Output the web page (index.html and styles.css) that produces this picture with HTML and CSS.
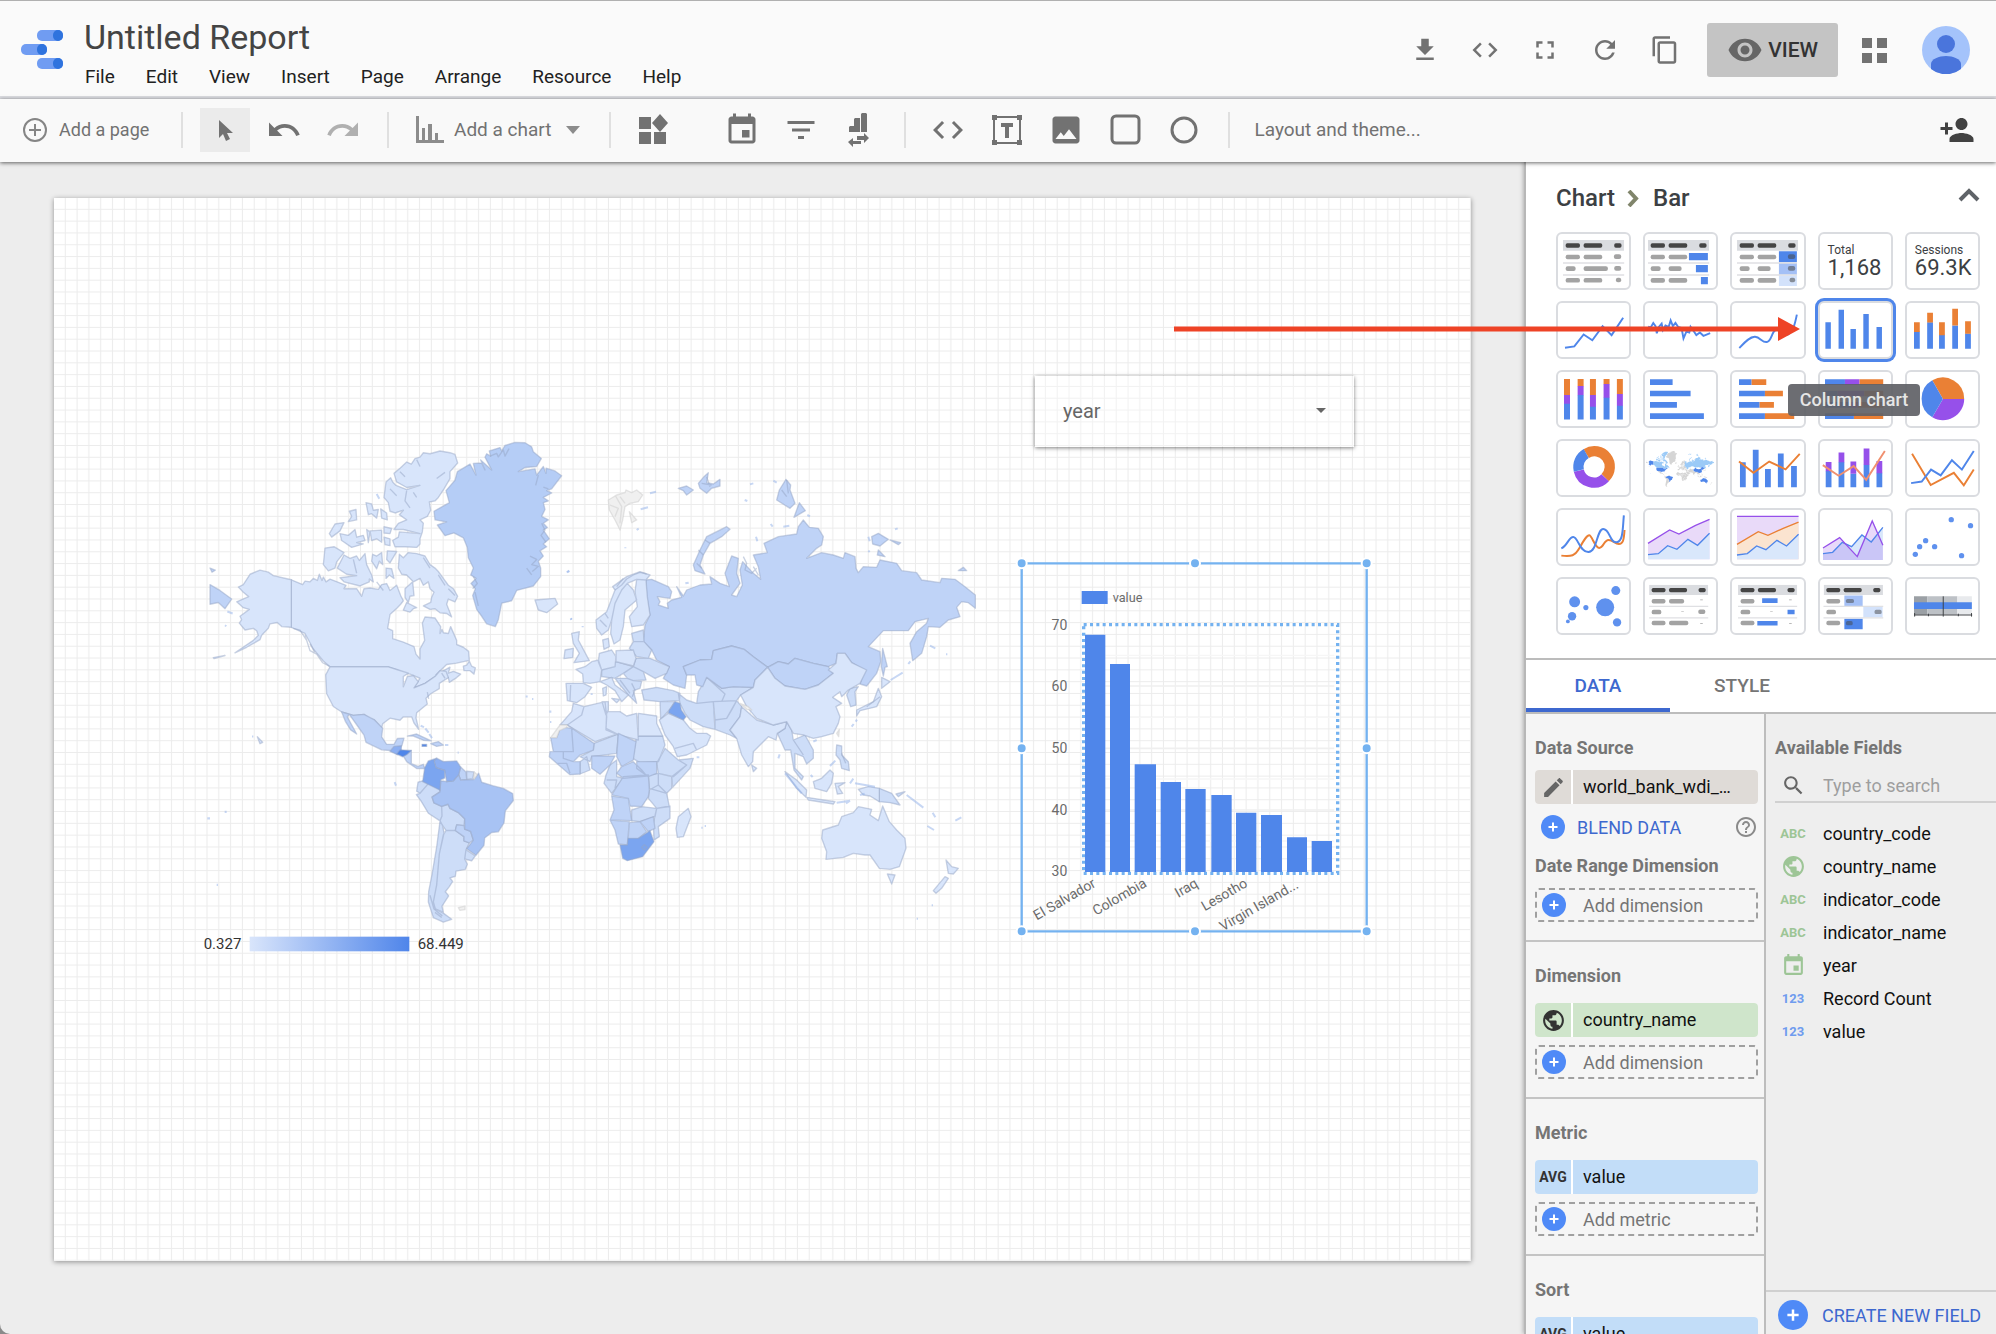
FILE: index.html
```html
<!DOCTYPE html>
<html lang="en">
<head>
    <meta charset="UTF-8">
    <meta name="viewport" content="width=device-width, initial-scale=1.0">
    <title>Untitled Report</title>
    <link rel="stylesheet" href="styles.css">
</head>
<body>
    <!-- Shared icons -->
    <svg class="sprite" aria-hidden="true">
        <symbol id="i-plus" viewBox="0 0 24 24"><circle cx="12" cy="12" r="12" fill="#4f8af7"/><path d="M12 7.5v9M7.5 12h9" stroke="#fff" stroke-width="2"/></symbol>
        <symbol id="i-code" viewBox="0 0 24 24"><path d="M9.4 16.6L4.8 12l4.6-4.6L8 6l-6 6 6 6 1.4-1.4zm5.2 0l4.6-4.6-4.6-4.6L16 6l6 6-6 6-1.4-1.4z"/></symbol>
        <symbol id="i-event" viewBox="0 0 24 24"><path d="M17 12h-5v5h5v-5zM16 1v2H8V1H6v2H5c-1.11 0-1.99.9-1.99 2L3 19c0 1.1.89 2 2 2h14c1.1 0 2-.9 2-2V5c0-1.1-.9-2-2-2h-1V1h-2zm3 18H5V8h14v11z"/></symbol>
        <symbol id="i-globe" viewBox="0 0 24 24"><path d="M12 2C6.48 2 2 6.48 2 12s4.48 10 10 10 10-4.48 10-10S17.52 2 12 2zm-1 17.93c-3.95-.49-7-3.85-7-7.93 0-.62.08-1.21.21-1.79L9 15v1c0 1.1.9 2 2 2v1.93zm6.9-2.54c-.26-.81-1-1.39-1.9-1.39h-1v-3c0-.55-.45-1-1-1H8v-2h2c.55 0 1-.45 1-1V7h2c1.1 0 2-.9 2-2v-.41c2.93 1.19 5 4.06 5 7.41 0 2.08-.8 3.97-2.1 5.39z"/></symbol>
        <!-- table header and rows used by the table thumbnails -->
        <symbol id="t-head" viewBox="0 0 184 34"><path fill="#dadce0" d="M0 0h184v32H0z"/><g fill="#454545"><rect x="8" y="10" width="43" height="13" rx="5"/><rect x="62" y="10" width="56" height="13" rx="5"/><rect x="154" y="10" width="22" height="13" rx="5"/></g></symbol>
    </svg>

    <header class="header">
        <svg class="logo" viewBox="0 0 42 40" aria-hidden="true">
            <rect x="16" y="0" width="26" height="11" rx="5" fill="#709cf2"/><rect x="32" y="0" width="10" height="11" rx="5" fill="#2f73de"/>
            <rect x="0" y="14" width="26" height="11" rx="5" fill="#709cf2"/><rect x="16" y="14" width="10" height="11" rx="5" fill="#2f73de"/>
            <rect x="16" y="28" width="26" height="11" rx="5" fill="#709cf2"/><rect x="32" y="28" width="10" height="11" rx="5" fill="#2f73de"/>
        </svg>
        <div class="title-block">
            <h1 class="report-title">Untitled Report</h1>
            <nav class="menu">
                <button>File</button>
                <button>Edit</button>
                <button>View</button>
                <button>Insert</button>
                <button>Page</button>
                <button>Arrange</button>
                <button>Resource</button>
                <button>Help</button>
            </nav>
        </div>
        <div class="header-actions">
            <button class="icon-btn" aria-label="Download"><svg viewBox="0 0 24 24"><path d="M19 9h-4V3H9v6H5l7 7 7-7zM5 18v2h14v-2H5z"/></svg></button>
            <button class="icon-btn" aria-label="Embed"><svg><use href="#i-code"/></svg></button>
            <button class="icon-btn" aria-label="Full screen"><svg viewBox="0 0 24 24"><path d="M7 14H5v5h5v-2H7v-3zm-2-4h2V7h3V5H5v5zm12 7h-3v2h5v-5h-2v3zM14 5v2h3v3h2V5h-5z"/></svg></button>
            <button class="icon-btn" aria-label="Refresh"><svg viewBox="0 0 24 24"><path d="M17.65 6.35C16.2 4.9 14.21 4 12 4c-4.42 0-7.99 3.58-7.99 8s3.57 8 7.99 8c3.73 0 6.84-2.55 7.73-6h-2.08c-.82 2.33-3.04 4-5.65 4-3.31 0-6-2.69-6-6s2.69-6 6-6c1.66 0 3.14.69 4.22 1.78L13 11h7V4l-2.35 2.35z"/></svg></button>
            <button class="icon-btn" aria-label="Copy"><svg viewBox="0 0 24 24"><path d="M16 1H4c-1.1 0-2 .9-2 2v14h2V3h12V1zm3 4H8c-1.1 0-2 .9-2 2v14c0 1.1.9 2 2 2h11c1.1 0 2-.9 2-2V7c0-1.1-.9-2-2-2zm0 16H8V7h11v14z"/></svg></button>
        </div>
        <button class="view-btn">
            <svg viewBox="0 0 24 24"><path d="M12 4.5C7 4.5 2.73 7.61 1 12c1.73 4.39 6 7.5 11 7.5s9.27-3.11 11-7.5c-1.73-4.39-6-7.5-11-7.5zM12 17c-2.76 0-5-2.24-5-5s2.24-5 5-5 5 2.24 5 5-2.24 5-5 5zm0-8c-1.66 0-3 1.34-3 3s1.34 3 3 3 3-1.34 3-3-1.34-3-3-3z"/></svg>
            VIEW
        </button>
        <button class="apps" aria-label="Apps"><svg viewBox="0 0 25 25"><path d="M0 0h10v10H0zM15 0h10v10H15zM0 15h10v10H0zM15 15h10v10H15z"/></svg></button>
        <button class="avatar" aria-label="Account"><svg viewBox="0 0 48 48"><circle cx="24" cy="24" r="24" fill="#a4c3fb"/><circle cx="24" cy="18" r="9" fill="#4a75dc"/><path d="M9 43V38c0-5 8-8 15-8s15 3 15 8v5a24 24 0 0 1-30 0z" fill="#4a75dc"/></svg></button>
    </header>

    <div class="toolbar">
        <button class="add-page">
            <svg viewBox="0 0 28 28"><circle cx="14" cy="14" r="11" fill="none" stroke="#858585" stroke-width="2"/><path d="M14 8v12M8 14h12" stroke="#858585" stroke-width="2"/></svg>
            Add a page
        </button>
        <span class="sep"></span>
        <div class="tools">
            <button class="tool active" aria-label="Select"><svg viewBox="0 0 36 36"><path d="M12 8v18l4-4 3 7 4-2-3-6h6z"/></svg></button>
            <button class="tool" aria-label="Undo"><svg viewBox="0 0 24 24"><path d="M12.5 8c-2.65 0-5.05.99-6.9 2.6L2 7v9h9l-3.62-3.62c1.39-1.16 3.16-1.88 5.12-1.88 3.54 0 6.55 2.31 7.6 5.5l2.37-.78C21.08 11.03 17.15 8 12.5 8z"/></svg></button>
            <button class="tool faded" aria-label="Redo"><svg viewBox="0 0 24 24"><path d="M18.4 10.6C16.55 8.99 14.15 8 11.5 8c-4.65 0-8.58 3.03-9.96 7.22L3.9 16c1.05-3.19 4.05-5.5 7.6-5.5 1.95 0 3.73.72 5.12 1.88L13 16h9V7l-3.6 3.6z"/></svg></button>
        </div>
        <span class="sep"></span>
        <button class="add-chart">
            <svg viewBox="0 0 28 28"><path d="M0 0h3v24h25v3H0zM6 12h3v12H6zM12 8h4v16h-4zM19 17h3v7h-3z"/></svg>
            Add a chart
            <svg class="caret" viewBox="0 0 14 8"><path d="M0 0h14L7 8z"/></svg>
        </button>
        <span class="sep"></span>
        <div class="tools">
            <button class="tool" aria-label="Community visualizations"><svg viewBox="0 0 36 36"><path d="M4 5h12v12H4zM4 20h12v12H4zM19 20h12v12H19zM25 2l8 9-8 9-8-9z"/></svg></button>
            <button class="tool apart" aria-label="Date range"><svg><use href="#i-event"/></svg></button>
            <button class="tool" aria-label="Filter control"><svg viewBox="0 0 24 24"><path d="M10 18h4v-2h-4v2zM3 6v2h18V6H3zm3 7h12v-2H6v2z"/></svg></button>
            <button class="tool" aria-label="Data control"><svg viewBox="0 0 36 36"><path d="M7 20v-5l1-1h4V7l1-1h5v14zM19 20V2l1-1h4l1 1v18zM15 24h7v-3l5 5-5 5v-3h-7zM19 32h-8v3l-5-5 5-4v3h8z"/></svg></button>
        </div>
        <span class="sep"></span>
        <div class="tools">
            <button class="tool" aria-label="URL embed"><svg><use href="#i-code"/></svg></button>
            <button class="tool" aria-label="Text"><svg viewBox="0 0 36 36"><path d="M5 5h26v26H5z" fill="none" stroke="#727272" stroke-width="2"/><path d="M3 3h5v5H3zM28 3h5v5h-5zM3 28h5v5H3zM28 28h5v5h-5zM12 11h12v4h-4v11h-4V15h-4z"/></svg></button>
            <button class="tool" aria-label="Image"><svg viewBox="0 0 24 24"><path d="M21 19V5c0-1.100-.9-2-2-2H5c-1.100 0-2 .9-2 2v14c0 1.100.9 2 2 2h14c1.100 0 2-.9 2-2zM5 18l3.500-4.500 2 2.500L14 11.500 19 18z"/></svg></button>
            <button class="tool" aria-label="Rectangle"><svg viewBox="0 0 36 36"><rect x="5" y="4" width="27" height="27" rx="4" fill="none" stroke="#727272" stroke-width="3"/></svg></button>
            <button class="tool" aria-label="Circle"><svg viewBox="0 0 36 36"><circle cx="18" cy="18" r="12" fill="none" stroke="#727272" stroke-width="3"/></svg></button>
        </div>
        <span class="sep"></span>
        <button class="layout-btn">Layout and theme...</button>
        <button class="share" aria-label="Share"><svg viewBox="0 0 24 24"><path d="M15 12c2.210 0 4-1.790 4-4s-1.790-4-4-4-4 1.790-4 4 1.790 4 4 4zm-9-2V7H4v3H1v2h3v3h2v-3h3v-2H6zm9 4c-2.670 0-8 1.340-8 4v2h16v-2c0-2.660-5.330-4-8-4z"/></svg></button>
    </div>

    <div class="workspace">
        <main class="canvas">
            <div class="page">
                <svg class="grid" viewBox="0 0 120 90" preserveAspectRatio="none" aria-hidden="true">
                    <pattern id="cell" width="1" height="1" patternUnits="userSpaceOnUse"><path d="M.91 0H1V1H0V.91H.91z" fill="#ececec"/></pattern>
                    <rect width="120" height="90" fill="url(#cell)"/>
                </svg>

                <svg class="map" viewBox="0 0 2400 1620" role="img" aria-label="Average value by country">
                    <!-- Americas -->
                    <g transform="scale(1 1.033)">
                        <g class="t0"><path id="canada" d="M304 464L338 478 345 468 360 470 370 460 382 466 388 448 396 466 400 456 408 470 420 462 468 480 462 490 500 490 515 512 522 490 540 488 565 492 575 478 590 475 600 495 620 480 632 510 640 525 632 535 622 545 600 565 593 605 608 612 608 635 640 645 672 658 678 680 690 694 690 665 704 640 697 590 705 572 735 575 752 600 750 620 756 608 760 618 775 620 782 600 800 640 800 652 820 660 836 672 838 698 800 706 770 710 738 740 780 718 775 735 790 730 812 738 800 748 778 762 775 748 735 745 705 765 672 778 680 765 690 750 660 738 640 735 620 725 595 717 420 717 400 700 370 665 345 620 304 602zM612 155L630 140 650 122 664 128 675 112 690 108 700 95 720 98 750 90 780 95 795 100 803 125 780 150 780 170 762 200 745 225 735 235 718 238 722 262 712 280 690 290 700 300 697 325 690 345 690 360 680 370 645 368 615 368 608 350 625 340 628 325 690 330 640 318 612 318 625 300 650 290 628 275 640 262 615 270 600 265 595 240 582 225 588 180 602 168 608 180 618 190 650 202 690 190 650 196 620 180zM405 372L432 368 462 385 440 412 435 430 415 438 400 420zM462 392L480 402 500 395 508 408 525 388 530 420 545 450 550 470 538 462 538 470 510 482 462 470 450 458 500 452 470 448 442 430zM450 330L475 335 495 318 500 340 520 335 525 350 500 356 520 360 485 370 455 350zM418 330L435 302 462 298 450 322 425 340zM478 265L498 260 500 290 475 295 485 280zM528 240L545 244 550 262 565 260 560 285 545 272 535 275zM540 322L575 320 575 355 560 345 545 350zM530 318L540 325 535 356zM572 258L590 270 592 290 575 285zM582 310L605 315 600 330 582 328zM582 340L600 345 600 365 585 362zM548 390L560 395 575 385 578 420 568 410 560 432 545 410zM592 380L620 382 600 415 590 405zM588 430L605 432 612 460 598 450 588 460zM628 390L640 400 655 385 680 388 705 395 720 420 735 430 745 440 760 460 775 480 790 490 803 512 795 528 775 520 770 535 785 572 770 562 750 560 735 548 720 550 700 540 722 530 725 515 732 500 720 490 715 470 700 480 690 460 670 470 650 450 635 448 625 430zM645 490L668 470 672 510 660 512 655 530 645 515zM650 530L680 545 670 548 660 558 640 552zM820 715L830 712 838 700 845 715 856 720 852 738 840 728 822 728z"/></g>
                        <g class="t0"><path id="usa" d="M304 464L250 452 235 442 210 436 180 448 160 478 145 485 160 500 176 513 140 528 160 545 178 550 150 570 155 580 148 590 165 610 190 605 200 612 205 625 190 640 135 676 170 660 210 638 215 625 235 605 240 592 262 588 275 600 304 602zM420 717L595 717 625 726 655 735 640 745 640 775 652 745 670 742 685 760 672 778 705 765 735 745 750 728 768 730 775 748 748 765 748 780 722 795 708 808 712 825 680 850 678 865 686 898 672 880 665 862 640 862 630 872 600 866 578 882 575 895 552 870 540 868 522 855 490 858 455 848 430 832 410 795 407 740zM70 690L105 684 72 693zM202 920L218 936 210 940z"/></g>
                        <g class="t1"><path id="west-rest" d="M698 1048L715 1056 690 1084 680 1078 684 1052zM715 1056L748 1070 750 1080 726 1095 732 1112 755 1122 756 1150 750 1164 715 1142 692 1105 679 1088 690 1084zM755 1122L774 1116 780 1128 805 1140 824 1158 822 1178 800 1176 796 1192 768 1192 758 1178 750 1164 756 1150zM828 1248L856 1266 845 1280 824 1275zM768 1192L796 1192 822 1210 822 1222 838 1228 828 1248 824 1275 832 1290 826 1305 798 1310 796 1325 780 1330 788 1340 778 1355 766 1370 776 1382 756 1412 760 1430 736 1420 730 1400 740 1350 748 1260 760 1205zM750 1164L758 1178 762 1200 748 1260 740 1350 730 1400 736 1420 760 1432 785 1450 760 1458 730 1445 715 1400 716 1370 726 1320 740 1240 748 1180zM830 1020L852 1022 848 1042 830 1044z"/></g>
                        <g class="t2"><path id="mexico" d="M455 848L490 858 522 855 552 870 578 895 575 920 590 942 612 942 622 925 642 924 636 945 620 968 600 960 575 958 528 936 522 915 500 885 478 855 472 862 500 912 482 900 466 875zM664 960L664 998 684 1006 700 1000 704 1012 680 1012 650 992 640 976zM652 918L680 912 724 932 700 930 670 918zM722 940L745 934 760 944 740 948zM796 1192L800 1176 822 1178 824 1188 842 1195 850 1220 838 1228 822 1222 822 1210zM812 1008L828 1022 830 1044 812 1046 806 1030zM60 478L90 495 125 520 105 548 85 530 60 535zM60 430L76 436 66 442z"/></g>
                        <g class="t3"><path id="greenland" d="M802 150L840 128 858 160 850 126 875 125 885 145 872 116 905 145 885 108 890 98 902 105 898 90 930 80 935 90 945 74 975 65 1005 66 1025 78 1030 92 1054 112 1040 135 1005 138 985 150 1035 142 1040 160 1060 135 1068 155 1068 140 1095 148 1115 162 1085 200 1070 205 1085 212 1060 225 1075 235 1060 240 1065 260 1055 280 1075 290 1060 300 1072 312 1060 320 1078 345 1060 360 1070 368 1050 380 1060 395 1045 410 1052 430 1052 455 1030 482 980 495 965 525 935 532 925 580 916 600 890 592 875 570 860 550 848 510 856 490 843 475 858 460 842 450 850 430 835 400 832 370 820 342 792 328 765 336 742 305 770 296 735 290 732 265 778 240 768 205 795 175z"/></g>
                        <g class="t4"><path id="brazil" d="M806 1030L812 1046 850 1044 866 1026 875 1052 908 1062 940 1070 968 1085 970 1105 946 1135 942 1170 925 1196 905 1198 884 1214 882 1235 858 1264 830 1245 850 1220 842 1195 824 1188 824 1158 805 1140 780 1128 774 1116 755 1122 732 1112 726 1095 750 1080 752 1048 770 1050 790 1048z"/></g>
                        <path class="t5" d="M612 948L634 946 634 970 622 972 600 962zM740 982L760 992 800 990 812 1008 806 1030 790 1048 770 1050 764 1018 738 1010 732 990z"/>
                        <path class="t6" d="M740 982L715 990 704 1010 698 1050 735 1068 750 1075 752 1045 764 1040 764 1018 738 1010 732 990z"/>
                        <path class="t7" d="M630 958L664 960 650 972 638 978 620 970zM696 942h14v6h-14z"/>
                        <path class="tn" d="M852 1022L862 1030 852 1044zM805 1416L825 1412 825 1422 810 1424z"/>
                        <!-- fjords and island channels -->
                        <path class="coast" d="M900 105l20-8 5 10 15-20 5 18 12-22M1045 160l-8 30M1060 195l15 5M1055 300l10 20-12 15 15 20M1020 395l20 10-15 15 20 5-18 15M1010 430l15 20M850 455l12 20-14 15M855 500l10 40M630 150l15 15M680 115l10 20M740 170l25-18M600 200l20 20M650 205l-5 30 15 20M670 210l10 15M310 605l20 5 20 30 10 30 20 10 18 25 20 10M345 625l10 30M360 650l15 25M720 1380l12 40 25 20M735 1430l20 15M700 400l20 30M745 450l20 30M775 490l20 20M560 470l20 25M490 405l10 40M712 790l4 20M755 735l10 15"/>
                        <path class="specks" d="M692 888l10 4M706 896l10 12M718 912l8 12M765 944h10M186 919h4M104 1138h6M52 1157h8M614 1052l4 10M80 1350h4M1007 803h6M1026 810h4M1078 847h6M1142 576l3 4M1132 442l6-3M105 596l4 3M112 556l16 6M560 215l8 14M803 966h3M1080 877h4"/>
                    </g>

                    <!-- Europe, Africa, Asia, Oceania -->
                    <g transform="translate(1050 60)">
                        <g class="t2"><path id="russia" d="M318 420L335 418 385 440 395 455 390 475 352 470 360 485 355 495 385 505 382 490 395 480 425 472 410 440 430 468 440 450 480 435 515 432 510 410 540 430 568 440 555 400 575 348 595 355 590 400 600 430 575 465 590 470 607 435 600 390 608 365 640 400 662 418 655 380 640 345 682 338 672 310 715 290 770 282 775 260 790 240 808 262 835 265 850 290 845 315 830 325 800 355 845 338 880 345 910 355 915 338 945 350 948 385 955 398 970 380 1010 382 1020 360 1070 370 1085 392 1130 398 1145 420 1200 428 1205 415 1245 418 1275 440 1306 465 1306 505 1285 488 1265 485 1250 502 1260 530 1225 540 1200 562 1165 560 1160 590 1145 640 1118 662 1110 610 1130 575 1160 550 1165 535 1125 545 1105 572 1030 572 985 620 1020 635 1022 665 1010 700 980 738 960 732 972 690 935 668 915 640 892 640 888 670 865 680 820 670 765 655 745 672 715 665 683 682 640 650 612 628 575 618 520 632 515 658 480 660 430 680 440 705 435 745 400 735 370 715 388 680 350 660 335 630 310 605 315 555 330 525 320 470zM1028 625L1042 680 1035 682 1030 708 1024 680zM560 260L570 268 545 290 510 310 490 345 480 375 495 402 465 392 460 375 480 330 500 290 530 275zM738 118L752 135 750 150 765 190 750 205 710 180 718 150zM778 188L796 212 762 232zM995 290L1015 280 1045 298 1020 318 998 312zM1050 300L1082 308 1075 314zM1015 330L1035 350 1012 345zM415 145L440 138 460 150 440 165 430 152zM475 130L492 110 505 98 500 128 520 132 540 118 540 138 515 145 500 160 480 145zM1255 392L1270 382 1280 392z"/></g>
                        <g class="t1"><path id="eurasia" d="M275 580L310 570 312 605 280 605zM268 625L280 605 312 605 335 630 325 655 290 650zM288 655L330 655 388 680 380 700 345 715 310 695 280 680zM185 690L228 665 280 680 250 700 225 715 185 710zM250 700L280 680 310 695 318 720 280 722 262 715zM262 715L280 722 305 724 300 745 280 752 290 790 265 765 240 735 225 715zM305 750L350 742 400 752 420 760 418 782 360 785 312 780zM470 790L475 755 500 712 545 745 580 740 640 742 602 765 590 782 520 785zM500 712L555 762 545 785M415 760L440 780 470 790 520 785 525 868 490 860 450 840 435 820 420 790zM520 785L590 782 575 810 560 835 525 840zM590 782L605 800 600 830 570 870 590 895 570 885 525 868 525 840 560 835zM360 785L405 785 388 810 362 838zM740 845L755 870 760 900 795 885 820 930 820 955 800 972 790 950 765 940 765 985 790 1010 785 1020 762 990 752 930 735 930 712 880 735 865zM760 900L790 945M605 945M930 745L955 740 945 755 948 795 932 800 920 765zM890 915L905 918 905 945 925 965 928 992 905 985 900 960 888 945zM1018 1045L1055 1060 1080 1095 1050 1088 1018 1085zM1068 1062L1095 1055 1075 1070z"/></g>
                        <g class="t0"><path id="eurasia-light" d="M168 540L200 515 225 450 218 440 260 410 300 395 330 405 318 420 290 418 262 430 245 450 225 490 215 540 205 570 185 585 170 565zM262 430L280 450 290 480 255 510 250 560 240 600 222 612 212 580 215 540 225 490 245 450zM290 418L318 420 322 470 330 525 310 555 275 560 268 530 292 500 285 455zM188 600L205 595 208 620 192 628zM178 640L215 630 228 650 225 680 185 690 175 665zM228 632L280 630 288 655 280 678 228 665zM108 688L135 680 155 665 175 660 185 690 180 725 150 730 130 728 128 702zM78 730L130 730 155 742 135 770 110 788 82 782zM92 735L90 782M95 580L118 575 115 600 148 662 102 668 118 640 100 610zM75 630L100 625 98 652 72 656zM180 725L215 712 225 735 265 765 245 785 225 752 200 735zM215 775L240 778 230 788zM188 745L200 740 198 765 190 768zM605 800L650 840 700 855 740 845 735 865 712 880 708 900 685 890 640 935 638 965 625 980 605 945 590 895 570 870 600 830zM635 975L650 985 640 995zM358 840L385 820 430 840 450 865 470 880 500 880 512 888 500 915 440 945 412 950 400 920 375 885zM405 925L460 910 470 930M1025 712L1050 725 1025 745zM1015 745L1025 770 1010 800 960 812 950 828 950 810 1000 785zM735 995L770 1020 800 1050 798 1072 770 1045zM800 1072L850 1080 885 1085 880 1092 805 1080zM820 1025L845 1015 870 990 880 1000 875 1030 860 1055 825 1045zM885 1030L915 1028 895 1040 908 1060 892 1062zM955 1048L985 1040 1018 1045 1018 1085 990 1068 970 1065zM1218 1260L1235 1280 1255 1285 1240 1302 1225 1300zM1180 1352L1215 1310 1225 1315 1205 1345 1188 1360zM-15 480L45 475 53 492 20 518-5 510z"/></g>
                        <path class="t2" d="M430 680L480 660 515 658 520 632 575 618 612 628 640 650 683 682 645 720 640 742 580 740 545 745 500 712 488 740 470 735 465 705 440 705zM683 682L715 665 745 672 765 655 820 670 865 680 880 700 835 735 795 748 735 738 705 715z"/>
                        <g class="t0"><path id="china" d="M683 682L705 715 735 738 795 748 835 735 880 700 865 690 888 670 892 640 915 640 935 668 980 690 960 730 925 750 905 770 900 755 878 772 905 790 888 800 900 830 895 850 880 880 845 890 820 895 790 885 760 880 740 845 700 855 650 835 620 800 602 765 640 742 645 720z"/></g>
                        <g class="t0"><path id="australia" d="M848 1170L895 1155 905 1130 940 1118 955 1100 995 1108 990 1125 1015 1142 1028 1098 1048 1145 1070 1170 1095 1195 1098 1225 1078 1280 1050 1288 1018 1285 990 1245 975 1245 940 1240 910 1252 858 1258 860 1235 845 1195zM1042 1302L1065 1305 1055 1332z"/></g>
                        <g class="t1"><path id="africa" d="M290 888L368 888 375 915 355 965 300 968 278 955zM375 925L415 960 440 975 400 1010 355 1000 350 970zM415 960L460 955 450 985 398 1042 395 1010 440 975zM120 965L140 950 150 990 120 1002zM162 910L235 882 230 940 155 950 150 965 120 950 160 930zM325 1005L355 1000 395 1010 395 1045 380 1060 328 1045zM355 1000L355 1035M328 1050L355 1035 380 1060 388 1100 350 1105 325 1075zM275 1110L305 1100 350 1105 345 1130 300 1145 275 1142zM350 1105L390 1098 390 1135 355 1160 358 1190 342 1200 340 1150zM210 975L230 960 230 1010 250 1015 215 1060 192 1030 198 1005zM200 1020L230 1020 225 1045"/></g>
                        <path class="t0" d="M100 790L132 800 125 825 82 855 60 855 95 815zM132 800L195 785 200 830 198 865 232 882 165 905 82 855 125 825zM186 785L205 785 205 810 198 825zM200 815L240 815 260 828 290 820 295 900 235 885 198 870zM295 820L350 828 350 850 368 888 295 888zM445 1105L453 1130 430 1190 412 1192 408 1165 415 1130z"/>
                        <g class="t2"><path id="africa-mid" d="M32 893L50 893 58 872 60 860 95 865 100 935 40 935zM82 855L162 910 160 930 120 945 100 965 70 955 70 935 100 935 95 865zM235 880L288 905 280 960 245 980 230 950zM290 965L350 965 350 1000 325 1010 290 985zM30 935L70 935 70 955 100 965 120 965 120 1002 90 1004 50 970 28 950zM155 948L225 948 210 975 180 1003 155 985zM230 1000L245 980 280 965 305 990 320 1008 250 1015zM250 1010L325 1005 328 1050 325 1070 305 1100 270 1098 265 1075 215 1065zM215 1068L265 1075 275 1142 210 1140 222 1110zM300 1145L340 1130 345 1165 325 1175zM210 1140L268 1145 262 1215 235 1212 225 1170zM268 1148L300 1145 320 1175 290 1200 264 1200zM50 970L80 970 90 1000"/></g>
                        <path class="t6" d="M388 810L405 785 420 790 424 810 438 830 430 840 385 818zM240 1215L262 1215 264 1195 295 1195 330 1172 342 1205 308 1250 262 1262 248 1255zM305 1222l8-8 8 8-8 8z"/>
                        <path class="tn" d="M205 180L230 165 255 158 258 150 275 158 290 150 308 165 295 185 270 190 255 200 248 240 240 270 225 240 208 210zM225 165L245 200 240 250M210 195L235 205 225 230M240 170L255 190M268 215L290 240 275 248zM60 855L82 855 80 862 58 872 50 893 32 893zM890 880L898 868 896 890zM600 790L625 800 635 810 620 808z"/>
                        <path class="coast" d="M225 450l20-15 15-18 20-12 20-8 20 5M230 440l20-25M475 330l15 15M470 370l15 15M495 300l15 10M725 150l15 20M740 120l5 40M610 350l10 20-5 20 20 10 15-15M640 380l15 25M500 110l10 30M485 130l30 5M180 540l20 20M195 520l10 15M275 730l10 20-8 20M240 720l30 40M905 940l12 30M1020 770l-40 30M955 430l0 0"/>
                        <path class="specks" d="M630 133l10-3M614 180l8 3M700 122l10 6M692 252l6 8M730 260l18-3M648 290l4 14M802 225l8 4M1065 268l8-3M985 290l4 14M985 332l4 4M436 430l10-2M1052 720l36-22M1105 672l6-8M1170 617l16 8M1218 643h4M935 860l6-8M947 845l4-6M715 955l4-12M820 905l10-5M812 1005l6 6M870 978l16-16M735 1000l50 60M890 1088l40-6M930 1030l10-14M945 1030l60 10M1100 1065l50 38M1178 1118l8 14M1162 1158l20 12M1246 1142l18-10M484 1163h4M494 1158h4M470 952h8M1175 1396h4M290 270l6-4M256 322v3M302 208l22-6M330 160l18-5M80 397l8-5M128 558v4M92 535l3 4M155 760v5M918 1090l12-8M960 1065l14-4M1130 1436h4"/>
                    </g>

                    <linearGradient id="scale"><stop offset="0" stop-color="#d9e5fb"/><stop offset="1" stop-color="#4f85ea"/></linearGradient>
                    <text class="map-label" x="41" y="1586">0.327</text>
                    <rect x="179" y="1550" width="479" height="44" fill="url(#scale)"/>
                    <text class="map-label" x="683" y="1586">68.449</text>
                </svg>

                <label class="year-filter">
                    <select aria-label="year"><option>year</option></select>
                    <svg viewBox="0 0 10 5"><path d="M0 0h10L5 5z"/></svg>
                </label>

                <svg class="bar-chart" viewBox="0 0 1200 1230" role="img" aria-label="value by country">
                    <path d="M316 438H1003M316 625H1003M316 810H1003" stroke="#efefef" stroke-width="5"/>
                    <path d="M316 346H1003M316 532H1003M316 717H1003M316 903H1003" stroke="#f6f6f6" stroke-width="4"/>
                    <rect x="245" y="153" width="78" height="39" fill="#4f86ea"/>
                    <text class="legend-text" x="338" y="186">value</text>
                    <g class="axis" text-anchor="end">
                        <text x="202" y="270">70</text>
                        <text x="202" y="453">60</text>
                        <text x="202" y="639">50</text>
                        <text x="202" y="825">40</text>
                        <text x="202" y="1008">30</text>
                        <text transform="translate(290 1038) rotate(-30)">El Salvador</text>
                        <text transform="translate(443 1038) rotate(-30)">Colombia</text>
                        <text transform="translate(597 1038) rotate(-30)">Iraq</text>
                        <text transform="translate(745 1038) rotate(-30)">Lesotho</text>
                        <text transform="translate(898 1042) rotate(-30)">Virgin Island...</text>
                    </g>
                    <path d="M251 254H1013V1000H251z" fill="none" stroke="#74b2f0" stroke-width="10" stroke-dasharray="9 10"/>
                    <path fill="#4f86ea" d="M255 284h61v712h-61zM330 372h60v624h-60zM404 673h64v323h-64zM482 726h61v270h-61zM556 747h61v249h-61zM634 765h61v231h-61zM708 818h61v178h-61zM783 825h63v171h-63zM861 892h60v104h-60zM935 903h61v93h-61z"/>
                    <path d="M65 70H1100V1174H65z" fill="none" stroke="#74b2f0" stroke-width="7"/>
                    <g fill="#74b2f0" stroke="#fff" stroke-width="6">
                        <circle cx="65" cy="70" r="15"/><circle cx="585" cy="70" r="15"/><circle cx="1100" cy="70" r="15"/>
                        <circle cx="65" cy="625" r="15"/><circle cx="1100" cy="625" r="15"/>
                        <circle cx="65" cy="1174" r="15"/><circle cx="585" cy="1174" r="15"/><circle cx="1100" cy="1174" r="15"/>
                    </g>
                </svg>
            </div>
        </main>

        <aside class="panel">
            <section class="picker">
                <div class="picker-head">
                    <h2>Chart</h2>
                    <svg class="crumb" viewBox="0 0 12 17"><path d="M2 1l7 7.500-7 7.500" fill="none" stroke="#80856b" stroke-width="4"/></svg>
                    <h2>Bar</h2>
                    <button class="collapse" aria-label="Collapse"><svg viewBox="0 0 22 15"><path d="M2 13l9-9 9 9" fill="none" stroke="#5f6368" stroke-width="4"/></svg></button>
                </div>
                <div class="charts">
                    <button class="thumb" aria-label="Table"><svg viewBox="114 222 214 162">
                        <use href="#t-head" x="129" y="240" width="184" height="34"/>
                        <path class="rule" d="M129 309h184M129 345h184"/>
                        <g class="cell"><rect x="137" y="284" width="43" height="14" rx="6"/><rect x="191" y="284" width="56" height="14" rx="6"/><rect x="282" y="283" width="22" height="14" rx="6"/><rect x="137" y="319" width="30" height="14" rx="6"/><rect x="191" y="319" width="73" height="14" rx="6"/><rect x="283" y="318" width="21" height="14" rx="6"/><rect x="137" y="354" width="43" height="14" rx="6"/><rect x="191" y="354" width="56" height="14" rx="6"/><rect x="288" y="353" width="16" height="14" rx="6"/></g>
                    </svg></button>
                    <button class="thumb" aria-label="Table with bars"><svg viewBox="378 222 214 162">
                        <use href="#t-head" x="387" y="240" width="184" height="34"/>
                        <path class="rule" d="M387 309h184M387 345h184"/>
                        <g class="cell"><rect x="395" y="284" width="43" height="14" rx="6"/><rect x="449" y="284" width="56" height="14" rx="6"/><rect x="395" y="319" width="30" height="14" rx="6"/><rect x="449" y="319" width="39" height="14" rx="6"/><rect x="395" y="354" width="43" height="14" rx="6"/><rect x="449" y="354" width="56" height="14" rx="6"/></g>
                        <path class="b" d="M510 279h57v22h-57zM531 315h36v22h-36zM546 351h21v22h-21z"/>
                    </svg></button>
                    <button class="thumb" aria-label="Table with heatmap"><svg viewBox="636 222 214 162">
                        <use href="#t-head" x="651" y="240" width="184" height="34"/>
                        <path class="b" d="M777 274h54v33h-54z"/><path fill="#a4c0f6" d="M777 309h54v35h-54z"/><path fill="#d3e2fb" d="M777 346h54v32h-54z"/>
                        <path class="rule" d="M651 309h180M651 345h180"/>
                        <g class="cell"><rect x="659" y="284" width="43" height="14" rx="6"/><rect x="713" y="284" width="56" height="14" rx="6"/><rect x="659" y="319" width="30" height="14" rx="6"/><rect x="713" y="319" width="39" height="14" rx="6"/><rect x="659" y="354" width="43" height="14" rx="6"/><rect x="713" y="354" width="56" height="14" rx="6"/></g>
                        <g fill="#474747" opacity=".55"><rect x="804" y="283" width="22" height="14" rx="6"/><rect x="804" y="318" width="22" height="14" rx="6"/><rect x="809" y="353" width="17" height="14" rx="6"/></g>
                    </svg></button>
                    <button class="thumb score"><small>Total</small><span>1,168</span></button>
                    <button class="thumb score"><small>Sessions</small><span>69.3K</span></button>

                    <button class="thumb" aria-label="Time series"><svg viewBox="114 426 214 168"><path class="bl" d="M132 565L161 561 190 524 217 542 249 498 277 526 313 472"/></svg></button>
                    <button class="thumb" aria-label="Sparkline"><svg viewBox="378 426 214 168"><path class="bl" d="M384 500L392 502 400 488 407 498 411 520 416 502 426 490 430 510 438 496 448 500 454 480 461 498 469 488 477 500 488 504 494 536 503 515 512 518 516 500 526 514 534 526 545 518 556 528 577 520"/></svg></button>
                    <button class="thumb" aria-label="Smoothed time series"><svg viewBox="636 426 214 168"><path class="bl" d="M655 566C672 548 688 530 704 531S728 552 742 547 756 515 768 510C790 500 785 528 800 526 822 520 828 492 834 462"/></svg></button>
                    <button class="thumb selected" aria-label="Column chart"><svg viewBox="900 426 214 168"><path class="b" d="M913 486h17v82h-17zM954 447h17v121h-17zM991 507h17v61h-17zM1031 460h17v108h-17zM1072 501h17v67h-17z"/></svg></button>
                    <button class="thumb" aria-label="Stacked column chart"><svg viewBox="1158 426 214 168"><path class="b" d="M1176 515h18v53h-18zM1217 486h18v82h-18zM1254 525h18v43h-18zM1295 496h18v72h-18zM1335 521h18v47h-18z"/><path class="o" d="M1176 486h18v30h-18zM1217 456h18v31h-18zM1254 486h18v40h-18zM1295 444h18v52h-18zM1335 483h18v39h-18z"/></svg></button>

                    <button class="thumb" aria-label="100% stacked column chart"><svg viewBox="114 636 214 162"><path class="o" d="M132 657h18v49h-18zM173 657h18v22h-18zM210 657h18v49h-18zM251 657h18v16h-18zM291 657h18v46h-18z"/><path class="p" d="M132 705h18v27h-18zM173 678h18v28h-18zM210 705h18v36h-18zM251 672h18v42h-18zM291 702h18v36h-18z"/><path class="b" d="M132 731h18v48h-18zM173 705h18v74h-18zM210 740h18v39h-18zM251 713h18v66h-18zM291 737h18v42h-18z"/></svg></button>
                    <button class="thumb" aria-label="Bar chart"><svg viewBox="378 636 214 162"><path class="b" d="M393 658h68v17h-68zM393 692h122v17H393zM393 726h81v17h-81zM393 760h162v17H393z"/></svg></button>
                    <button class="thumb" aria-label="Stacked bar chart"><svg viewBox="636 636 214 162"><path class="b" d="M657 658h38v17h-38zM657 692h78v17h-78zM657 726h62v17h-62zM657 760h78v17h-78z"/><path class="o" d="M695 658h44v17h-44zM735 692h54v17h-54zM719 726h43v17h-43zM735 760h88v17h-88z"/></svg></button>
                    <button class="thumb" aria-label="100% stacked bar chart"><svg viewBox="900 636 214 162"><path class="b" d="M915 658h60v17h-60zM915 692h38v17h-38zM915 726h78v17h-78zM915 760h87v17h-87z"/><path class="p" d="M975 658h44v17h-44zM953 692h80v17h-80zM993 726h20v17h-20z"/><path class="o" d="M1019 658h71v17h-71zM1033 692h57v17h-57zM1013 726h77v17h-77zM1002 760h88v17h-88z"/></svg></button>
                    <button class="thumb" aria-label="Pie chart"><svg viewBox="1158 636 214 162"><path class="o" d="M1266 717L1234 661A64 64 0 0 1 1330 717z"/><path class="p" d="M1266 717H1330A64 64 0 0 1 1234 772z"/><path class="b" d="M1266 717L1234 772A64 64 0 0 1 1234 661z"/></svg></button>

                    <button class="thumb" aria-label="Donut chart"><svg viewBox="114 60 214 168"><g fill="none" stroke-width="32"><path stroke="#ea8035" d="M198 99A48 48 0 0 1 257 174"/><path stroke="#9650ea" d="M257 174A48 48 0 0 1 175 152"/><path stroke="#4f86ea" d="M175 152A48 48 0 0 1 198 99"/></g></svg></button>
                    <button class="thumb" aria-label="Geo map"><svg viewBox="378 60 214 168"><g transform="translate(372 86) scale(.092 .077)">
                        <g transform="scale(1 1.033)"><g fill="#d5d5d5"><use href="#greenland"/><use href="#mexico"/><use href="#west-rest"/></g>
                        <use href="#canada" fill="#9bcaf7"/><use href="#usa" fill="#4f86ea"/><use href="#brazil" fill="#4f86ea"/></g>
                        <g transform="translate(1050 60)"><g fill="#d5d5d5"><use href="#eurasia"/><use href="#eurasia-light"/><use href="#africa"/><use href="#africa-mid"/></g><use href="#russia" fill="#9bcaf7"/><use href="#china" fill="#4f86ea"/><use href="#australia" fill="#4f86ea"/></g>
                    </g></svg></button>
                    <button class="thumb" aria-label="Combo chart"><svg viewBox="636 60 214 168"><path class="b" d="M657 126h18v78h-18zM697 87h18v117h-18zM735 147h18v57h-18zM775 99h18v105h-18zM816 138h18v66h-18z"/><path class="ol" d="M654 124L699 159 748 124 799 148 843 100"/></svg></button>
                    <button class="thumb" aria-label="Stacked combo chart"><svg viewBox="900 60 214 168"><path class="b" d="M914 153h18v51h-18zM954 125h18v79h-18zM991 162h18v42h-18zM1032 134h18v70h-18zM1072 159h18v45h-18z"/><path class="p" d="M914 125h18v29h-18zM954 96h18v30h-18zM991 124h18v38h-18zM1032 83h18v52h-18zM1072 122h18v38h-18z"/><path class="ol salmon" d="M905 135L954 168 1001 138 1040 181 1098 91"/></svg></button>
                    <button class="thumb" aria-label="Line chart"><svg viewBox="1158 60 214 168"><path class="ol" d="M1170 100L1228 197 1300 159 1331 198 1362 149"/><path class="bl" d="M1167 191L1200 186 1229 149 1259 167 1294 120 1325 149 1362 91"/></svg></button>

                    <button class="thumb" aria-label="Smoothed line chart"><svg viewBox="114 270 214 162"><path class="ol" d="M124 407C155 410 165 408 178 385S200 346 208 346 225 384 238 384 252 360 266 360 285 372 297 372 312 362 314 330"/><path class="bl" d="M124 385C142 378 146 351 160 351S178 395 205 396 230 327 250 327 270 370 290 367 308 330 312 286"/></svg></button>
                    <button class="thumb" aria-label="Area chart"><svg viewBox="378 270 214 162"><path fill="#e9daf9" d="M387 370L452 330 480 342 530 316 572 298V418H387z"/><path fill="#d9e7fb" d="M387 404L418 401 446 377 474 388 507 358 536 376 572 340V418H387z"/><path class="pl" d="M387 370L452 330 480 342 530 316 572 298"/><path class="bl thin" d="M387 404L418 401 446 377 474 388 507 358 536 376 572 340"/></svg></button>
                    <button class="thumb" aria-label="100% stacked area chart"><svg viewBox="636 270 214 162"><path fill="#e9daf9" d="M651 289H836V418H651z"/><path fill="#fbe4d0" d="M651 373L715 335 744 346 790 325 836 306V418H651z"/><path fill="#d9e7fb" d="M651 405L682 401 710 378 738 389 771 361 800 378 836 343V418H651z"/><path class="pl" d="M651 289H836"/><path class="ol thin" d="M651 373L715 335 744 346 790 325 836 306"/><path class="bl thin" d="M651 405L682 401 710 378 738 389 771 361 800 378 836 343"/></svg></button>
                    <button class="thumb" aria-label="Stacked area chart"><svg viewBox="900 270 214 162"><path fill="#d9e7fb" d="M909 401L938 397 967 367 995 380 1026 345 1054 366 1089 322V420H909z"/><path fill="#9650ea" opacity=".22" d="M909 384L959 353 1012 410 1057 303 1089 376V420H909z"/><path class="bl thin" d="M909 401L938 397 967 367 995 380 1026 345 1054 366 1089 322"/><path class="pl" d="M909 384L959 353 1012 410 1057 303 1089 376"/></svg></button>
                    <button class="thumb" aria-label="Scatter chart"><svg viewBox="1158 270 214 162"><g fill="#5f91ee"><circle cx="1291" cy="299" r="8"/><circle cx="1349" cy="317" r="8"/><circle cx="1214" cy="362" r="8"/><circle cx="1196" cy="380" r="8"/><circle cx="1241" cy="380" r="8"/><circle cx="1183" cy="403" r="8"/><circle cx="1322" cy="407" r="8"/></g></svg></button>

                    <button class="thumb" aria-label="Bubble chart"><svg viewBox="114 474 214 168"><g fill="#5f91ee"><circle cx="162" cy="545" r="17"/><circle cx="257" cy="562" r="28"/><circle cx="290" cy="510" r="14"/><circle cx="197" cy="563" r="8"/><circle cx="154" cy="590" r="13"/><circle cx="141" cy="606" r="6"/><circle cx="294" cy="609" r="13"/></g></svg></button>
                    <button class="thumb" aria-label="Pivot table"><svg viewBox="378 474 214 168">
                        <use href="#t-head" x="387" y="492" width="184" height="34"/><path class="rule" d="M387 559h184M387 595h184"/>
                        <g class="cell"><rect x="395" y="536" width="43" height="14" rx="6"/><rect x="449" y="536" width="47" height="14" rx="6"/><rect x="395" y="570" width="30" height="14" rx="6"/><rect x="540" y="569" width="22" height="14" rx="6"/><rect x="395" y="604" width="43" height="14" rx="6"/><rect x="449" y="604" width="60" height="14" rx="6"/><path d="M546 538h8v2h-8zM487 574h8v2h-8zM546 612h8v2h-8z"/></g>
                    </svg></button>
                    <button class="thumb" aria-label="Pivot table with bars"><svg viewBox="636 474 214 168">
                        <use href="#t-head" x="651" y="492" width="184" height="34"/><path class="rule" d="M651 559h184M651 595h184"/>
                        <g class="cell"><rect x="659" y="536" width="43" height="14" rx="6"/><rect x="659" y="570" width="30" height="14" rx="6"/><rect x="659" y="604" width="43" height="14" rx="6"/><path d="M810 538h8v2h-8zM751 574h8v2h-8zM810 612h8v2h-8z"/></g>
                        <path class="b" d="M726 534h48v15h-48zM805 570h22v14h-22zM711 605h63v14h-63z"/>
                    </svg></button>
                    <button class="thumb" aria-label="Pivot table with heatmap"><svg viewBox="900 474 214 168">
                        <use href="#t-head" x="907" y="492" width="186" height="34"/>
                        <path fill="#a4c0f6" d="M972 525h57v33h-57z"/><path fill="#d3e2fb" d="M1031 561h60v32h-60z"/><path class="b" d="M972 598h57v32h-57z"/>
                        <path class="rule" d="M907 559h186M907 595h186"/>
                        <g class="cell"><rect x="916" y="536" width="43" height="14" rx="6"/><rect x="916" y="570" width="30" height="14" rx="6"/><rect x="916" y="604" width="43" height="14" rx="6"/></g>
                        <g fill="#474747" opacity=".5"><rect x="977" y="536" width="25" height="13" rx="5"/><rect x="1066" y="570" width="22" height="13" rx="5"/><rect x="977" y="605" width="21" height="13" rx="5"/></g>
                    </svg></button>
                    <button class="thumb" aria-label="Bullet chart"><svg viewBox="1158 474 214 168"><path fill="#9ba0a5" d="M1176 528h42v57h-42z"/><path fill="#bdc1c6" d="M1218 528h93v57h-93z"/><path fill="#e8eaed" d="M1311 528h45v57h-45z"/><path class="b" d="M1176 546h180v21h-180z"/><path d="M1176 586h181M1267 528v63M1178 580v11M1221 582v8M1314 582v8M1355 580v11" stroke="#3c4043" stroke-width="3"/></svg></button>
                </div>
            </section>

            <div class="tabs">
                <button class="tab current">DATA</button>
                <button class="tab">STYLE</button>
            </div>

            <div class="columns">
                <div class="setup">
                    <section class="group">
                        <h3>Data Source</h3>
                        <div class="chip source">
                            <button class="chip-icon" aria-label="Edit data source"><svg viewBox="0 0 24 24"><path d="M3 17.250V21h3.750L17.810 9.940l-3.750-3.750L3 17.250zM20.710 7.040c.39-.39.39-1.020 0-1.410l-2.340-2.340c-.39-.39-1.020-.39-1.410 0l-1.830 1.830 3.750 3.750 1.830-1.830z"/></svg></button>
                            <button class="chip-name">world_bank_wdi_…</button>
                        </div>
                        <div class="blend">
                            <button class="blend-btn"><svg><use href="#i-plus"/></svg>BLEND DATA</button>
                            <button class="help" aria-label="Help"><svg viewBox="0 0 24 24"><path d="M11 18h2v-2h-2v2zm1-16C6.480 2 2 6.480 2 12s4.480 10 10 10 10-4.480 10-10S17.520 2 12 2zm0 18c-4.410 0-8-3.590-8-8s3.590-8 8-8 8 3.590 8 8-3.590 8-8 8zm0-14c-2.210 0-4 1.790-4 4h2c0-1.100.9-2 2-2s2 .9 2 2c0 2-3 1.750-3 5h2c0-2.250 3-2.500 3-5 0-2.210-1.790-4-4-4z"/></svg></button>
                        </div>
                        <h3>Date Range Dimension</h3>
                        <button class="add"><svg><use href="#i-plus"/></svg>Add dimension</button>
                    </section>
                    <section class="group">
                        <h3>Dimension</h3>
                        <div class="chip dimension">
                            <button class="chip-icon" aria-label="Type"><svg><use href="#i-globe"/></svg></button>
                            <button class="chip-name">country_name</button>
                        </div>
                        <button class="add"><svg><use href="#i-plus"/></svg>Add dimension</button>
                    </section>
                    <section class="group">
                        <h3>Metric</h3>
                        <div class="chip metric">
                            <button class="chip-icon">AVG</button>
                            <button class="chip-name">value</button>
                        </div>
                        <button class="add"><svg><use href="#i-plus"/></svg>Add metric</button>
                    </section>
                    <section class="group">
                        <h3>Sort</h3>
                        <div class="chip metric">
                            <button class="chip-icon">AVG</button>
                            <button class="chip-name">value</button>
                        </div>
                    </section>
                </div>
                <div class="fields">
                    <h3>Available Fields</h3>
                    <label class="search">
                        <svg viewBox="0 0 24 24"><path d="M15.500 14h-.79l-.28-.27C15.410 12.590 16 11.110 16 9.500 16 5.910 13.090 3 9.500 3S3 5.910 3 9.500 5.910 16 9.500 16c1.610 0 3.090-.59 4.230-1.570l.27.28v.79l5 4.990L20.490 19l-4.990-5zm-6 0C7.010 14 5 11.990 5 9.500S7.010 5 9.500 5 14 7.010 14 9.500 11.990 14 9.500 14z"/></svg>
                        <input type="text" placeholder="Type to search" aria-label="Type to search">
                    </label>
                    <ul class="field-list">
                        <li><span class="kind dim">ABC</span>country_code</li>
                        <li><span class="kind dim"><svg><use href="#i-globe"/></svg></span>country_name</li>
                        <li><span class="kind dim">ABC</span>indicator_code</li>
                        <li><span class="kind dim">ABC</span>indicator_name</li>
                        <li><span class="kind dim"><svg><use href="#i-event"/></svg></span>year</li>
                        <li><span class="kind num">123</span>Record Count</li>
                        <li><span class="kind num">123</span>value</li>
                    </ul>
                    <button class="create"><svg><use href="#i-plus"/></svg>CREATE NEW FIELD</button>
                </div>
            </div>
        </aside>

        <div class="tooltip">Column chart</div>
        <svg class="arrow" viewBox="0 0 626 24" aria-hidden="true"><path d="M0 9.500h604V0l22 12-22 12v-9.500H0z" fill="#ee4326"/></svg>
    </div>
</body>
</html>
```
FILE: styles.css
```css
* {
    box-sizing: border-box;
}
html {
    background: #8a8a8a;
}
body {
    margin: 0;
    height: 100vh;
    display: flex;
    flex-direction: column;
    overflow: hidden;
    font-family: Roboto, "Liberation Sans", sans-serif;
    font-size: 18px;
    background: #ededed;
    border-radius: 0 0 0 10px;
}
button {
    font: inherit;
    color: inherit;
    background: none;
    border: none;
    padding: 0;
    text-align: left;
}
h1, h2, h3 {
    margin: 0;
}
svg {
    display: block;
    fill: currentColor;
}
.sprite {
    position: absolute;
    width: 0;
    height: 0;
}

/* Header */
.header {
    display: flex;
    align-items: center;
    height: 99px;
    padding: 3px 26px 0 21px;
    background: #fafafa;
    border-top: 1px solid #b0b0b0;
    border-bottom: 3px solid #dadbe0;
    flex: none;
}
.logo {
    width: 42px;
    height: 40px;
    margin-right: 21px;
}
.title-block {
    padding-top: 5px;
}
.report-title {
    font-size: 34px;
    line-height: 40px;
    font-weight: 400;
    color: #444;
}
.menu {
    display: flex;
    gap: 31px;
    margin-top: 8px;
    padding-left: 1px;
    font-size: 19px;
    line-height: 24px;
    color: #212121;
}
.header-actions {
    display: flex;
    gap: 30px;
    margin-left: auto;
    color: #727272;
}
.icon-btn svg {
    width: 30px;
    height: 30px;
}
.view-btn {
    display: flex;
    align-items: center;
    gap: 5px;
    height: 54px;
    margin: 0 24px 0 27px;
    padding: 0 20px;
    border-radius: 3px;
    background: #c4c4c4;
    color: #333;
    font-size: 21px;
    font-weight: 500;
}
.view-btn svg {
    width: 36px;
    height: 36px;
    color: #666;
}
.apps svg {
    width: 25px;
    height: 25px;
    color: #727272;
}
.avatar {
    margin-left: 35px;
}
.avatar svg {
    width: 48px;
    height: 48px;
}

/* Toolbar */
.toolbar {
    position: relative;
    z-index: 2;
    display: flex;
    align-items: center;
    height: 63px;
    padding: 0 21px 2px;
    background: #f9f9f9;
    box-shadow: 0 1px 4px rgba(0, 0, 0, .6);
    color: #727272;
    flex: none;
}
.sep {
    width: 2px;
    height: 36px;
    margin: 0 17px 0 19px;
    background: #e0e0e0;
}
.add-page {
    display: flex;
    align-items: center;
    gap: 10px;
    width: 141px;
    white-space: nowrap;
}
.add-page svg {
    width: 28px;
    height: 28px;
}
.tools {
    display: flex;
    gap: 9px;
}
.tool {
    display: flex;
    align-items: center;
    justify-content: center;
    width: 50px;
    height: 44px;
}
.tool svg {
    width: 36px;
    height: 36px;
}
.active {
    background: #ebebeb;
}
.faded {
    color: #b0b0b0;
}
.apart {
    margin-left: 30px;
}
.add-chart, .layout-btn {
    font-size: 19px;
}
.add-chart {
    display: flex;
    align-items: center;
    gap: 10px;
    padding: 0 10px;
}
.add-chart svg {
    width: 28px;
    height: 28px;
    color: #8c8c8c;
}
.add-chart .caret {
    width: 14px;
    height: 8px;
    margin-left: 5px;
}
.layout-btn {
    padding-left: 7px;
}
.share {
    margin-left: auto;
    color: #424242;
}
.share svg {
    width: 36px;
    height: 36px;
}

/* Report canvas */
.workspace {
    position: relative;
    display: flex;
    flex: 1;
    min-height: 0;
}
.canvas {
    flex: 1;
    min-width: 0;
    padding: 36px 53px 0 54px;
}
.page {
    position: relative;
    aspect-ratio: 4 / 3;
    background: #fff;
    box-shadow: 0 1px 5px rgba(0, 0, 0, .4);
}
.grid {
    width: 100%;
    height: 100%;
}
.map {
    position: absolute;
    left: 136px;
    top: 222px;
    width: 800px;
    height: 540px;
    stroke: #95a6c6;
    stroke-opacity: .5;
    stroke-width: 4;
    stroke-linejoin: round;
}
.map text, .map rect {
    stroke: none;
}
.t0 { fill: #d8e5fb; }
.t1 { fill: #cdddf8; }
.t2 { fill: #bfd3f7; }
.t3 { fill: #b5cdf6; }
.t4 { fill: #a8c3f4; }
.t5 { fill: #8db0f2; }
.t6 { fill: #7ba5f0; }
.t7 { fill: #4f86ea; }
.tn { fill: #f0f0f0; stroke: #ccc; }
.coast, .specks {
    fill: none;
}
.specks {
    stroke: #8fb0ea;
    stroke-width: 6;
}
.map-label {
    font-size: 45px;
    fill: #333;
}
.year-filter {
    position: absolute;
    left: 981px;
    top: 178px;
    width: 319px;
    height: 71px;
    background: rgba(255, 255, 255, .3);
    box-shadow: 0 1px 4px rgba(0, 0, 0, .5);
    color: #666;
}
.year-filter select {
    width: 100%;
    height: 100%;
    padding: 0 28px 2px;
    appearance: none;
    border: none;
    background: none;
    font: inherit;
    font-size: 20px;
    color: inherit;
}
.year-filter svg {
    position: absolute;
    right: 28px;
    top: 32px;
    width: 10px;
    height: 5px;
}
.bar-chart {
    position: absolute;
    left: 946px;
    top: 342px;
    width: 400px;
    height: 410px;
}
.axis {
    font-size: 42px;
    fill: #6b6b6b;
}
.legend-text {
    font-size: 38px;
    fill: #6b6b6b;
}

/* Side panel */
.panel {
    display: flex;
    flex-direction: column;
    width: 472px;
    border-left: 2px solid #b7b7b7;
    background: #fff;
    box-shadow: -1px 0 4px rgba(0, 0, 0, .25);
    flex: none;
}
.picker {
    padding: 20px 16px 23px 30px;
    border-bottom: 2px solid #bcbcbc;
}
.picker-head {
    display: flex;
    align-items: center;
    height: 32px;
    margin-bottom: 18px;
}
.picker-head h2 {
    font-size: 24px;
    font-weight: 500;
    color: #3c4043;
}
.crumb {
    width: 12px;
    height: 17px;
    margin: 0 14px 0 12px;
}
.collapse {
    margin-left: auto;
    padding-bottom: 8px;
}
.collapse svg {
    width: 22px;
    height: 15px;
}
.charts {
    display: grid;
    grid-template-columns: repeat(5, 1fr);
    gap: 11px 12px;
}
.thumb {
    height: 58px;
    border: 2px solid #dadce0;
    border-radius: 6px;
    background: #fff;
    overflow: hidden;
}
.thumb svg {
    width: 100%;
    height: 100%;
}
.selected {
    box-shadow: 0 0 0 3px #4f86ea;
}
.score {
    padding: 0 0 2px 8px;
    font-size: 22px;
    line-height: 21px;
    color: #3c4043;
}
.score small {
    display: block;
    font-size: 12px;
    line-height: 14px;
}
.b { fill: #4f86ea; }
.o { fill: #ea8035; }
.p { fill: #9650ea; }
.bl, .ol, .pl {
    fill: none;
    stroke: #4f86ea;
    stroke-width: 6;
}
.ol { stroke: #ea8035; }
.pl { stroke: #9650ea; }
.salmon { stroke: #f09070; }
.pl, .thin { stroke-width: 4; }
.cell { fill: #a3a3a3; }
.rule {
    stroke: #dfe0e3;
    stroke-width: 4;
}

.tabs {
    display: flex;
    height: 54px;
    border-bottom: 2px solid #bcbcbc;
    flex: none;
}
.tab {
    width: 144px;
    text-align: center;
    font-size: 19px;
    font-weight: 500;
    color: #757575;
    border-top: 2px solid transparent;
    border-bottom: 4px solid transparent;
}
.current {
    color: #3d68cf;
    border-bottom-color: #3d68cf;
}

.columns {
    display: flex;
    flex: 1;
    min-height: 0;
}
.setup {
    width: 240px;
    overflow: hidden;
    background: #f5f5f5;
    border-right: 2px solid #bdbdbd;
    flex: none;
}
h3 {
    font-size: 18px;
    line-height: 22px;
    font-weight: 700;
    color: #757575;
}
.group {
    padding: 23px 6px 18px 9px;
    border-bottom: 2px solid #c4c4c4;
}
.group h3 {
    margin-bottom: 16px;
}
.group:first-child h3 {
    margin-bottom: 11px;
}
.chip {
    display: flex;
    gap: 2px;
    height: 34px;
    border-radius: 4px;
    overflow: hidden;
    background: #fff;
    color: #111;
}
.chip-icon {
    display: flex;
    align-items: center;
    justify-content: center;
    width: 36px;
    font-size: 14px;
    font-weight: 700;
    color: #333;
}
.chip-icon svg {
    width: 25px;
    height: 25px;
}
.chip-name {
    flex: 1;
    padding: 0 0 2px 10px;
}
.source button { background: #dfdbd7; }
.dimension button { background: #cfe5cb; }
.metric button { background: #c2ddf8; }
.source .chip-icon { color: #666; }
.blend {
    display: flex;
    align-items: center;
    justify-content: space-between;
    height: 34px;
    margin: 6px 0 11px;
    padding-left: 6px;
    color: #3d68cf;
}
.blend-btn {
    display: flex;
    align-items: center;
    gap: 12px;
}
.blend-btn svg, .add svg {
    width: 24px;
    height: 24px;
}
.help svg {
    width: 24px;
    height: 24px;
    color: #8a8a8a;
}
.add {
    display: flex;
    align-items: center;
    gap: 17px;
    width: 100%;
    height: 34px;
    padding-left: 5px;
    border: 2px dashed #a0a0a0;
    border-radius: 4px;
    color: #757575;
}
.chip + .add {
    margin-top: 8px;
}
.fields {
    display: flex;
    flex-direction: column;
    flex: 1;
    padding: 23px 0 0 9px;
    background: #eee;
}
.search {
    display: flex;
    align-items: center;
    height: 34px;
    margin-top: 10px;
    border-bottom: 2px solid #d0d0d0;
    color: #666;
}
.search svg {
    width: 25px;
    height: 25px;
    margin: 0 17px 0 6px;
}
.search input {
    flex: 1;
    min-width: 0;
    padding: 0;
    border: none;
    background: none;
    font: inherit;
}
.search input::placeholder {
    color: #9e9e9e;
}
.field-list {
    margin: 14px 0 0;
    padding: 0;
    list-style: none;
    line-height: 33px;
    color: #111;
}
.field-list li {
    display: flex;
    align-items: center;
    height: 33px;
}
.kind {
    display: flex;
    justify-content: center;
    width: 36px;
    margin-right: 12px;
    font-size: 13px;
    font-weight: 700;
}
.kind svg {
    width: 25px;
    height: 25px;
}
.dim { color: #9dc596; }
.num { color: #6f9bee; }
.create {
    display: flex;
    align-items: center;
    gap: 14px;
    margin: auto 0 0 -9px;
    height: 44px;
    padding: 4px 0 0 12px;
    border-top: 2px solid #d0d0d0;
    color: #3d68cf;
}
.create svg {
    width: 30px;
    height: 30px;
}

/* Overlays */
.tooltip {
    position: absolute;
    right: 76px;
    top: 222px;
    width: 132px;
    border-radius: 4px;
    background: rgba(95, 97, 102, .92);
    color: #e6e6e6;
    font-weight: 500;
    line-height: 32px;
    text-align: center;
}
.arrow {
    position: absolute;
    right: 196px;
    top: 155px;
    width: 626px;
    height: 24px;
}
```
